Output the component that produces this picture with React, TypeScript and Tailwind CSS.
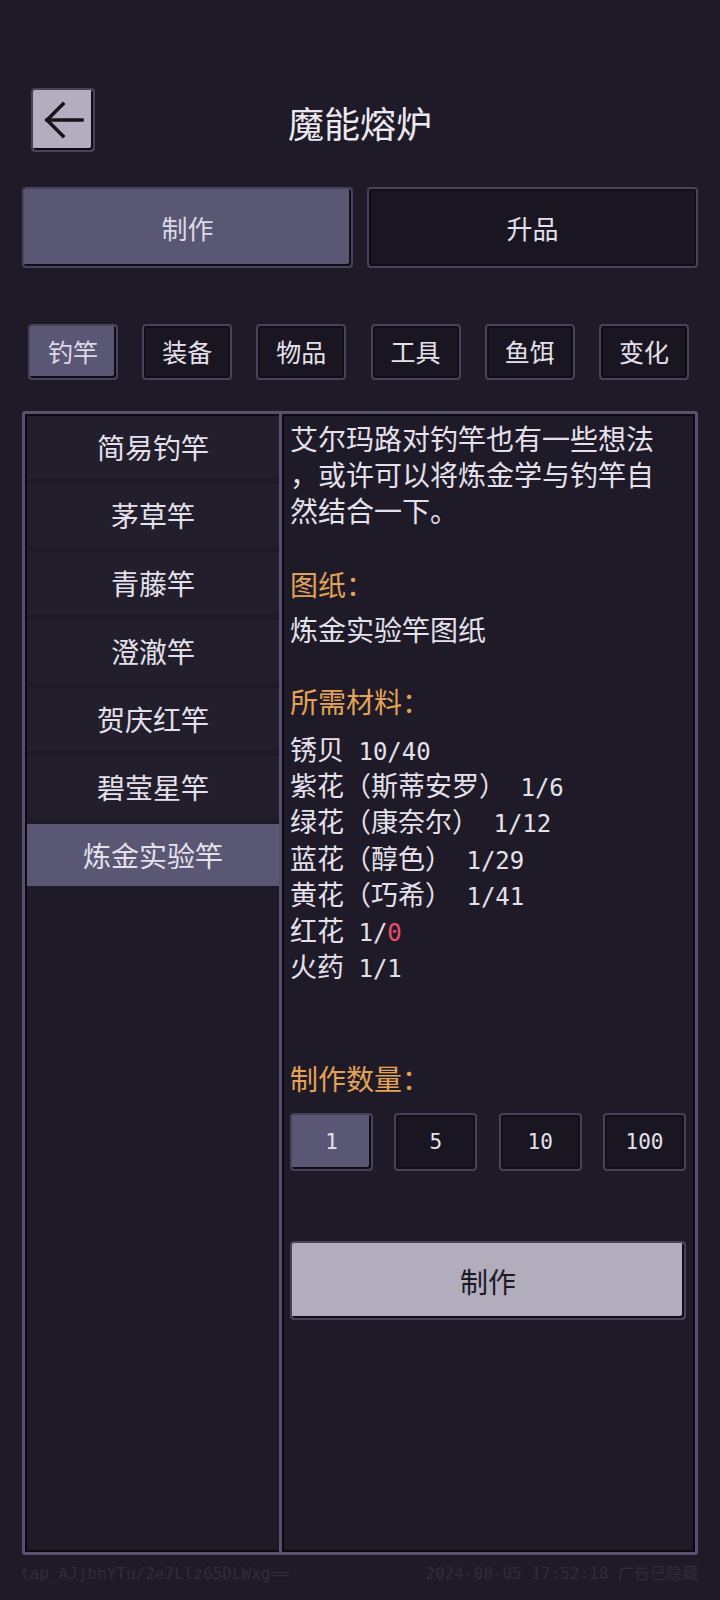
import { useState } from 'react';

const cjk = { fontFamily: '"Noto Sans CJK SC", "Noto Sans", sans-serif' };
const mono = { fontFamily: '"DejaVu Sans Mono", "Noto Sans CJK SC", monospace' };

const categories = ['钓竿', '装备', '物品', '工具', '鱼饵', '变化'];
const rods = ['简易钓竿', '茅草竿', '青藤竿', '澄澈竿', '贺庆红竿', '碧莹星竿', '炼金实验竿'];
const amounts = ['1', '5', '10', '100'];

const materials: { name: string; have: string; need: string; short?: boolean }[] = [
  { name: '锈贝', have: '10/', need: '40' },
  { name: '紫花（斯蒂安罗）', have: '1/', need: '6' },
  { name: '绿花（康奈尔）', have: '1/', need: '12' },
  { name: '蓝花（醇色）', have: '1/', need: '29' },
  { name: '黄花（巧希）', have: '1/', need: '41' },
  { name: '红花', have: '1/', need: '0', short: true },
  { name: '火药', have: '1/', need: '1' },
];

// pixel-ish frame: grey outer edge with a dark inner line
const frame = 'border-2 border-[#45425a] rounded-[4px] shadow-[inset_0_0_0_2px_#0f0d15]';
const frameOn = 'border-2 border-[#45425a] rounded-[4px] shadow-[inset_-2px_-2px_0_0_#0f0d15]';

export default function App() {
  const [tab, setTab] = useState(0);
  const [cat, setCat] = useState(0);
  const [rod, setRod] = useState(6);
  const [amount, setAmount] = useState(0);

  return (
    <div className="w-[720px] h-[1600px] bg-[#1e1a28] text-[#e4e1ec] flex flex-col px-[22px] pt-[88px]" style={cjk}>
      {/* Header */}
      <div className="flex items-center h-[64px]">
        <button className="w-[64px] h-[64px] ml-[9px] bg-[#b2aec0] border-2 border-[#45425a] rounded-[4px] shadow-[inset_-2px_-2px_0_0_#0f0d15] flex items-center justify-center">
          <svg width="60" height="60" viewBox="0 0 60 60" fill="none" stroke="#16131d" strokeWidth="3.5" strokeLinecap="square">
            <path d="M14 30 H49" />
            <path d="M30 14 L14 30 L30 46" />
          </svg>
        </button>
        <div className="flex-1 text-center text-[36px] leading-none text-[#ece9f2] pr-[73px] pt-[4px]">魔能熔炉</div>
      </div>

      {/* Tabs */}
      <div className="grid grid-cols-2 gap-[14px] mt-[35px]">
        {['制作', '升品'].map((t, i) => (
          <button
            key={t}
            onClick={() => setTab(i)}
            className={`h-[81px] text-[26px] ${i === tab ? 'bg-[#5a5775] text-[#dcd9e6] ' + frameOn : 'bg-[#1a1621] ' + frame}`}
          >
            {t}
          </button>
        ))}
      </div>

      {/* Categories */}
      <div className="flex justify-between pl-[6px] pr-[9px] mt-[56px]">
        {categories.map((c, i) => (
          <button
            key={c}
            onClick={() => setCat(i)}
            className={`w-[90px] h-[56px] text-[25px] ${i === cat ? 'bg-[#5a5775] text-[#dcd9e6] ' + frameOn : 'bg-[#1a1621] ' + frame}`}
          >
            {c}
          </button>
        ))}
      </div>

      {/* Main panel */}
      <div className="mt-[31px] h-[1144px] flex border-[3px] border-[#56526b] rounded-[3px] shadow-[inset_0_0_0_2px_#0c0a11] bg-[#1e1a28]">
        <div className="w-[257px] shrink-0 flex flex-col gap-[6px] pt-[2px] pl-[2px] border-r-[3px] border-[#56526b]">
          {rods.map((r, i) => (
            <button
              key={r}
              onClick={() => setRod(i)}
              className={`h-[62px] text-[28px] ${i === rod ? 'bg-[#5a5775]' : 'bg-[#221e2c]'}`}
            >
              {r}
            </button>
          ))}
        </div>

        <div className="flex-1 flex flex-col pl-[8px] pr-[9px] pt-[6px] text-[28px] leading-[36px] shadow-[inset_2px_0_0_0_#0c0a11]">
          <div className="whitespace-nowrap">
            <div>艾尔玛路对钓竿也有一些想法</div>
            <div>，或许可以将炼金学与钓竿自</div>
            <div>然结合一下。</div>
          </div>

          <div className="mt-[38px] text-[#e3a353]">图纸：</div>
          <div className="mt-[9px]">炼金实验竿图纸</div>

          <div className="mt-[36px] text-[#e3a353]">所需材料：</div>
          <div className="mt-[12px] flex flex-col text-[27px]">
            {materials.map(m => (
              <div key={m.name} className="h-[36.2px] whitespace-pre">
                {m.name}
                <span className="text-[24px]" style={mono}>
                  {' '}
                  {m.have}
                  <span className={m.short ? 'text-[#ec4a6e]' : ''}>{m.need}</span>
                </span>
              </div>
            ))}
          </div>

          <div className="mt-[76px] text-[#e3a353]">制作数量：</div>
          <div className="mt-[17px] flex justify-between">
            {amounts.map((a, i) => (
              <button
                key={a}
                onClick={() => setAmount(i)}
                className={`w-[83px] h-[58px] text-[21px] ${i === amount ? 'bg-[#5a5775] ' + frameOn : 'bg-[#1a1621] ' + frame}`}
                style={mono}
              >
                {a}
              </button>
            ))}
          </div>

          <button className="mt-[70px] h-[79px] bg-[#b1adbd] text-[#1c1925] text-[28px] border-2 border-[#45425a] rounded-[4px] shadow-[inset_-2px_-2px_0_0_#0f0d15]">
            制作
          </button>
        </div>
      </div>

      {/* Footer */}
      <div className="flex justify-between items-center mt-[7px] text-[16px] text-[#302c3c]" style={mono}>
        <span className="-ml-[2px]">tap_AJjbhYTu/2e7Llz65DLWxg==</span>
        <span>2024-08-05 17:52:18 广告已隐藏</span>
      </div>
    </div>
  );
}
